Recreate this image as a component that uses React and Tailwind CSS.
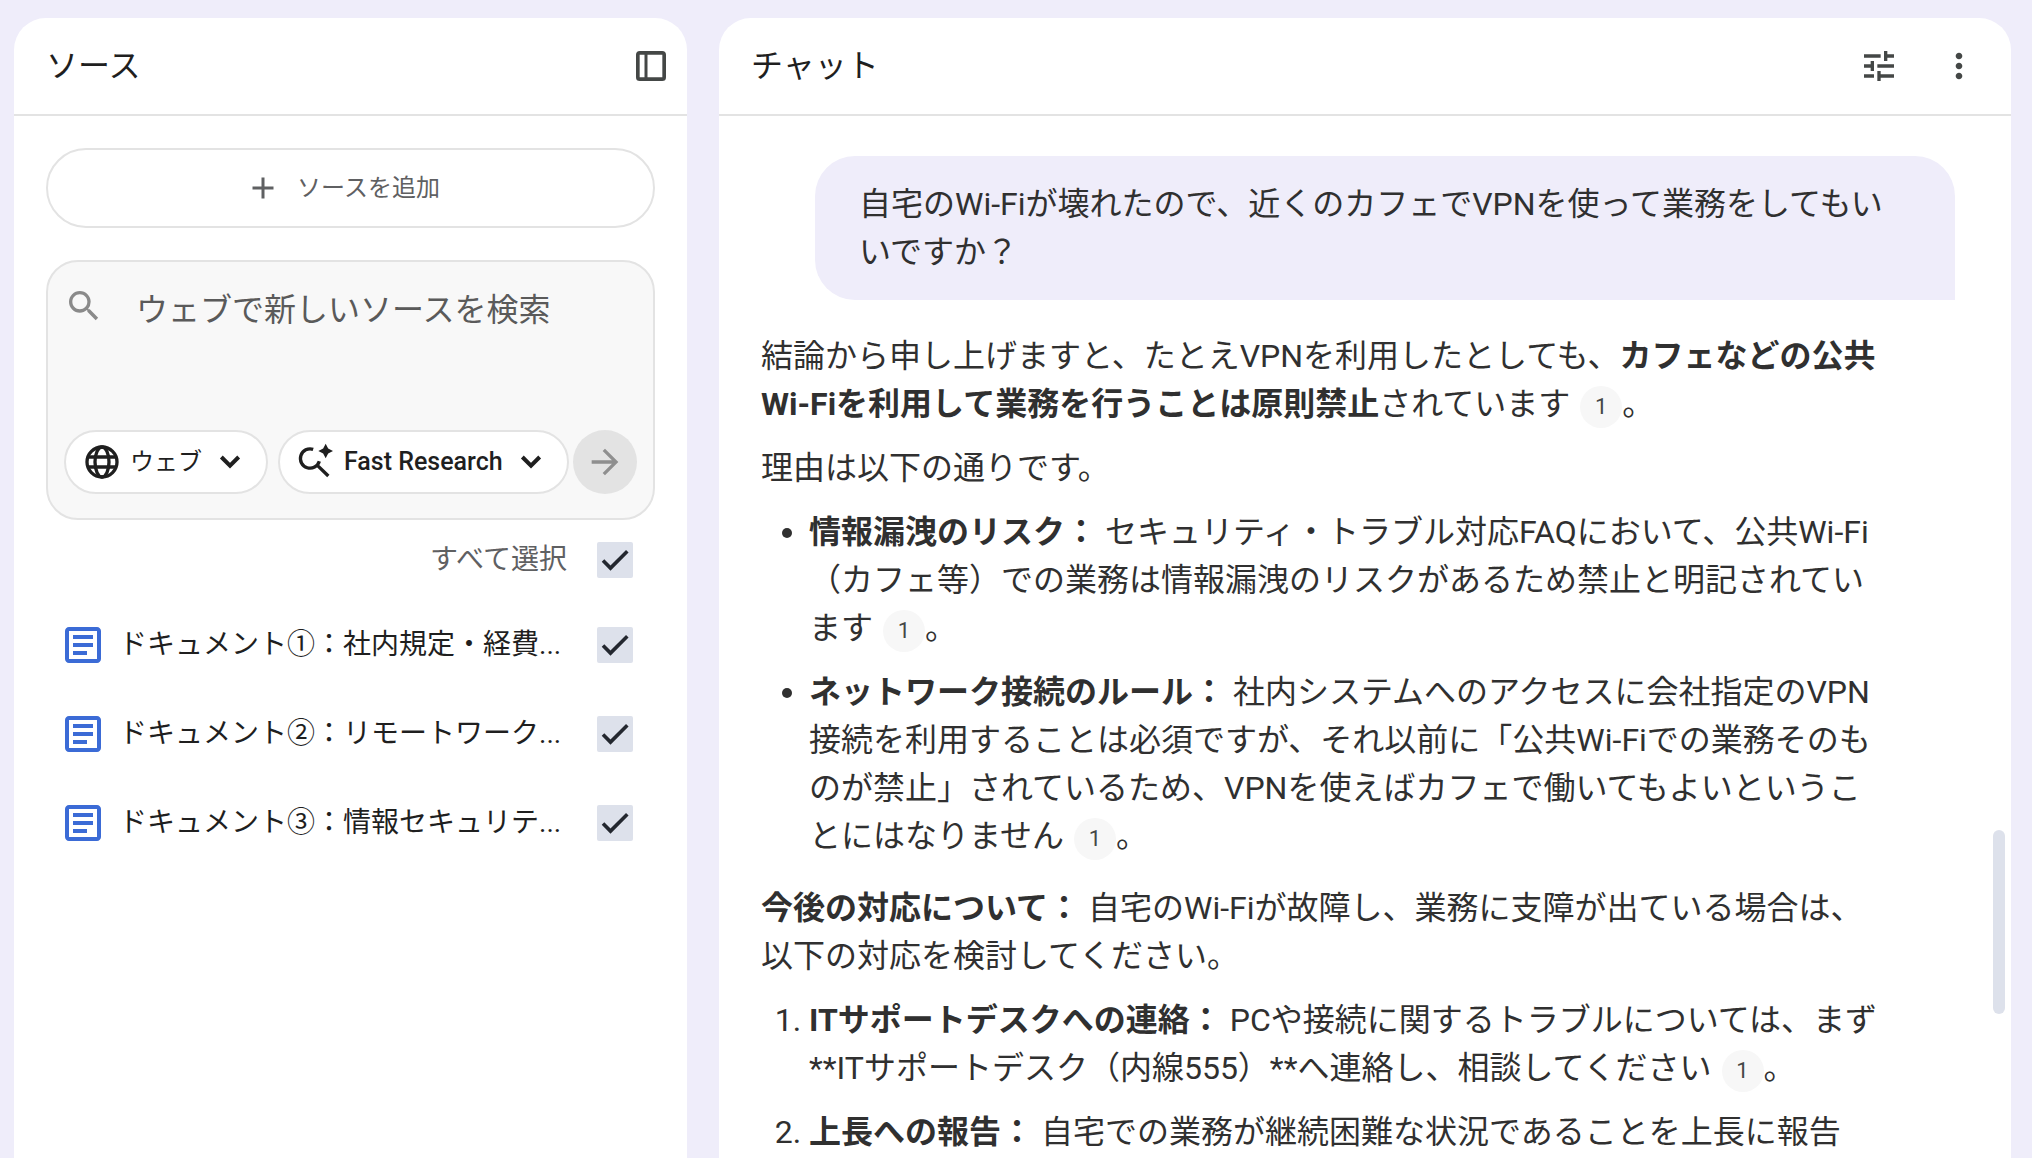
import { useState } from "react";
import {
  MdAdd,
  MdArrowForward,
  MdMoreVert,
  MdOutlineArticle,
  MdSearch,
  MdTune,
} from "react-icons/md";

const documents = [
  { id: 1, title: "ドキュメント①：社内規定・経費..." },
  { id: 2, title: "ドキュメント②：リモートワーク..." },
  { id: 3, title: "ドキュメント③：情報セキュリテ..." },
];

const PanelIcon = () => (
  <svg viewBox="0 0 24 24" className="size-10" fill="none" stroke="currentColor" aria-hidden="true">
    <rect x="4.1" y="4.1" width="15.8" height="15.8" rx="1.2" strokeWidth="2.2" />
    <path d="M9 4v16" strokeWidth="1.8" />
  </svg>
);

const GlobeIcon = () => (
  <svg viewBox="0 0 24 24" className="size-10" fill="none" stroke="currentColor" strokeWidth="2" aria-hidden="true">
    <circle cx="12" cy="12" r="9" />
    <ellipse cx="12" cy="12" rx="4.2" ry="9" />
    <path d="M3.5 9h17M3.5 15h17" />
  </svg>
);

const ResearchIcon = () => (
  <svg viewBox="0 0 24 24" className="size-10" aria-hidden="true">
    <path
      d="M10.3 4.4A5.8 5.8 0 1 0 14 11.6M12.2 13.4L19.4 20.4"
      fill="none"
      stroke="currentColor"
      strokeWidth="2"
    />
    <path d="M17.8 1l1.5 2.9 2.9 1.5-2.9 1.5-1.5 2.9-1.5-2.9-2.9-1.5 2.9-1.5z" fill="currentColor" />
  </svg>
);

const ChevronIcon = () => (
  <svg
    viewBox="0 0 24 24"
    className="pointer-events-none size-10"
    fill="none"
    stroke="currentColor"
    strokeWidth="2.4"
    aria-hidden="true"
  >
    <path d="M6.8 9l5.2 5.2L17.2 9" />
  </svg>
);

const Checkbox = ({ id, checked, onChange }) => (
  <span className="grid size-9 shrink-0 place-items-center">
    <input
      id={id}
      type="checkbox"
      checked={checked}
      onChange={onChange}
      className="peer col-start-1 row-start-1 size-9 appearance-none rounded-xs bg-[#dde1eb]"
    />
    <svg
      viewBox="0 0 24 24"
      className="pointer-events-none invisible col-start-1 row-start-1 size-9 text-[#23272f] peer-checked:visible"
      fill="none"
      stroke="currentColor"
      strokeWidth="2.4"
      aria-hidden="true"
    >
      <path d="M4 12.4l5 5L20.2 6.2" />
    </svg>
  </span>
);

const Citation = () => (
  <button
    type="button"
    className="ml-2.5 inline-flex size-[42px] items-center justify-center rounded-full bg-[#f7f7f7] align-middle text-[22px] leading-none text-[#444746]"
  >
    1
  </button>
);

const Sources = () => {
  const [selected, setSelected] = useState([1, 2, 3]);
  const allSelected = selected.length === documents.length;

  const toggle = (id) =>
    setSelected(selected.includes(id) ? selected.filter((s) => s !== id) : [...selected, id]);

  return (
    <section className="flex w-[673px] shrink-0 flex-col rounded-t-[32px] bg-white">
      <header className="flex h-[98px] items-center justify-between border-b-2 border-[#e3e3e3] pr-4 pl-8">
        <h2 className="text-[32px] leading-12">ソース</h2>
        <button type="button" aria-label="パネルを閉じる" className="text-[#444746]">
          <PanelIcon />
        </button>
      </header>

      <div className="flex flex-col px-8 pt-8">
        <button
          type="button"
          className="flex h-20 items-center justify-center gap-4 rounded-full border-2 border-[#e3e3e3] pr-4 text-2xl text-[#5f6062]"
        >
          <MdAdd className="size-9" />
          ソースを追加
        </button>

        {/* ウェブ検索 */}
        <form className="mt-8 flex flex-col rounded-[32px] border-2 border-[#e3e3e3] bg-[#f8f8f8] px-4 pt-5 pb-6">
          <div className="flex gap-8">
            <label htmlFor="query" className="pt-1 text-[#8a8a8a]">
              <MdSearch className="size-10" />
            </label>
            <textarea
              id="query"
              rows={3}
              placeholder="ウェブで新しいソースを検索"
              className="h-[148px] min-w-0 flex-1 resize-none overflow-hidden bg-transparent pt-1 text-[32px] leading-12 outline-none placeholder:text-[#5a5a5a]"
            />
          </div>
          <div className="flex items-center">
            <div className="flex h-16 items-center rounded-full border-2 border-[#e3e3e3] bg-white px-4">
              <GlobeIcon />
              <select
                aria-label="検索対象"
                className="-mr-10 ml-2 appearance-none bg-transparent pr-12 text-2xl outline-none"
              >
                <option>ウェブ</option>
              </select>
              <ChevronIcon />
            </div>
            <div className="ml-2.5 flex h-16 items-center rounded-full border-2 border-[#e3e3e3] bg-white px-4">
              <ResearchIcon />
              <select
                aria-label="リサーチの種類"
                className="-mr-10 ml-2 appearance-none bg-transparent pr-12 text-[25px] font-medium outline-none"
              >
                <option>Fast Research</option>
              </select>
              <ChevronIcon />
            </div>
            <button
              type="submit"
              aria-label="送信"
              className="ml-auto flex size-16 shrink-0 items-center justify-center rounded-full bg-[#e3e3e3] text-[#8f8f8f]"
            >
              <MdArrowForward className="size-10" />
            </button>
          </div>
        </form>

        <div className="flex h-20 items-center justify-end gap-[30px] pr-[22px]">
          <label htmlFor="select-all" className="text-[28px] leading-10 text-[#5f6062]">
            すべて選択
          </label>
          <Checkbox
            id="select-all"
            checked={allSelected}
            onChange={() => setSelected(allSelected ? [] : documents.map((d) => d.id))}
          />
        </div>

        <ul>
          {documents.map((doc) => (
            <li key={doc.id} className="flex h-[89px] items-center pr-[22px] pl-[13px]">
              <MdOutlineArticle className="size-12 shrink-0 text-[#3b6bd6]" />
              <label htmlFor={`doc-${doc.id}`} className="ml-3 min-w-0 flex-1 truncate text-[28px] leading-10">
                {doc.title}
              </label>
              <Checkbox
                id={`doc-${doc.id}`}
                checked={selected.includes(doc.id)}
                onChange={() => toggle(doc.id)}
              />
            </li>
          ))}
        </ul>
      </div>
    </section>
  );
};

const Chat = () => (
  <section className="relative flex min-w-0 flex-1 flex-col rounded-t-[32px] bg-white">
    <header className="flex h-[98px] shrink-0 items-center justify-between border-b-2 border-[#e3e3e3] px-8">
      <h2 className="text-[32px] leading-12">チャット</h2>
      <div className="flex gap-10 text-[#444746]">
        <button type="button" aria-label="チャットを設定">
          <MdTune className="size-10" />
        </button>
        <button type="button" aria-label="その他">
          <MdMoreVert className="size-10" />
        </button>
      </div>
    </header>

    <div className="min-h-0 flex-1 overflow-hidden pt-10 text-[32px] leading-12 text-[#303030]">
      <div className="mr-14 ml-24 rounded-[40px] rounded-br-none bg-[#efedfa] px-11 py-6">
        <p>自宅のWi-Fiが壊れたので、近くのカフェでVPNを使って業務をしてもいいですか？</p>
      </div>

      <div className="mt-8 mr-32 ml-[42px] flex flex-col gap-4">
        <p>
          結論から申し上げますと、たとえVPNを利用したとしても、
          <strong>カフェなどの公共Wi-Fiを利用して業務を行うことは原則禁止</strong>
          されています
          <Citation />。
        </p>
        <p>理由は以下の通りです。</p>
        <ul className="mb-2 flex list-disc flex-col gap-4 pl-12">
          <li>
            <strong>情報漏洩のリスク：</strong>{" "}
            セキュリティ・トラブル対応FAQにおいて、公共Wi-Fi（カフェ等）での業務は情報漏洩のリスクがあるため禁止と明記されています
            <Citation />。
          </li>
          <li>
            <strong>ネットワーク接続のルール：</strong>{" "}
            社内システムへのアクセスに会社指定のVPN接続を利用することは必須ですが、それ以前に「公共Wi-Fiでの業務そのものが禁止」されているため、VPNを使えばカフェで働いてもよいということにはなりません
            <Citation />。
          </li>
        </ul>
        <p>
          <strong>今後の対応について：</strong>{" "}
          自宅のWi-Fiが故障し、業務に支障が出ている場合は、以下の対応を検討してください。
        </p>
        <ol className="flex list-decimal flex-col gap-4 pl-12">
          <li>
            <strong>ITサポートデスクへの連絡：</strong>{" "}
            PCや接続に関するトラブルについては、まず**ITサポートデスク（内線555）**へ連絡し、相談してください
            <Citation />。
          </li>
          <li>
            <strong>上長への報告：</strong> 自宅での業務が継続困難な状況であることを上長に報告
          </li>
        </ol>
      </div>
    </div>

    {/* スクロールバー */}
    <div className="absolute right-1.5 bottom-36 h-46 w-3 rounded-full bg-[#dde1eb]" />
  </section>
);

const App = () => {
  return (
    <main
      lang="ja"
      className="flex h-screen gap-8 overflow-hidden bg-[#efedfa] pt-[18px] pr-[21px] pl-3.5 font-[Roboto,'Noto_Sans_CJK_JP',sans-serif] text-[#1f1f1f]"
    >
      <Sources />
      <Chat />
    </main>
  );
};

export default App;
